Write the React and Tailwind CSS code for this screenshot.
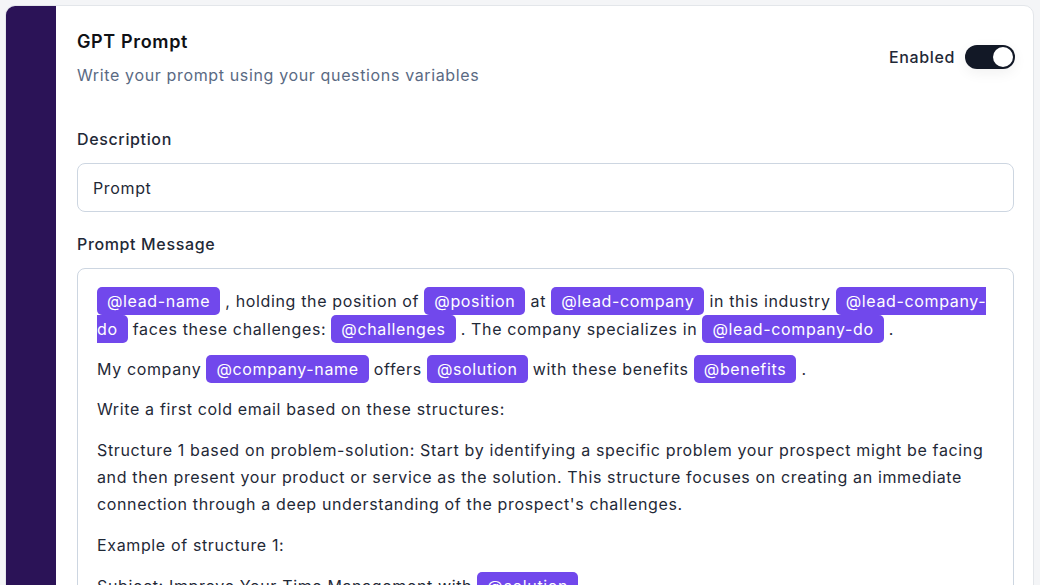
import React, { useState } from 'react';

const Tag = ({ children }) => (
    <span className="bg-[#7148ec] text-white rounded-[5px] px-[10px] py-[4px]">{children}</span>
);

const Toggle = () => {
    const [on, setOn] = useState(true);
    return (
        <button
            onClick={() => setOn(!on)}
            className={`relative w-[50px] h-[24px] rounded-full shadow-[0_4px_14px_rgba(0,0,0,0.06)] ${on ? 'bg-[#121826]' : 'bg-gray-300'}`}
        >
            <span className={`absolute top-[2px] w-[20px] h-[20px] rounded-full bg-white ${on ? 'left-[28px]' : 'left-[2px]'}`}></span>
        </button>
    );
};

const App = () => {
    return (
        <div className="min-h-screen bg-[#f4f5f7] pt-[5px] pl-[5px] pr-[6px] font-['Inter',sans-serif] tracking-[0.04em]">
            <div className="flex rounded-[10px] border border-[#e3e6ea] bg-white overflow-hidden">
                <div className="w-[50px] shrink-0 bg-[#2b1357]"></div>
                <div className="flex-1 pl-[21px] pr-[19px] pt-[22px] pb-10">
                    <div className="flex items-center justify-between">
                        <div>
                            <h2 className="text-[18px] leading-[28px] font-semibold text-[#0f1115]">GPT Prompt</h2>
                            <p className="mt-[7px] text-base leading-6 text-[#5a6a83]">Write your prompt using your questions variables</p>
                        </div>
                        <div className="flex items-center gap-[10px] mr-[-1px] mb-[2px]">
                            <span className="text-base font-medium text-[#1f2937]">Enabled</span>
                            <Toggle />
                        </div>
                    </div>

                    <label className="block mt-10 text-base leading-6 font-medium text-[#1f2937]">Description</label>
                    <div className="mt-3 h-[49px] flex items-center px-[15px] rounded-lg border border-[#cdd6e1] text-base text-[#1f2937]">
                        Prompt
                    </div>

                    <label className="block mt-5 text-base leading-6 font-medium text-[#1f2937]">Prompt Message</label>
                    <div className="mt-3 rounded-lg border border-[#cdd6e1] px-[19px] pt-[18px] pb-5 text-base leading-[27px] text-[#1f2937]">
                        <p className="mb-[13px] leading-[28px]">
                            <Tag>@lead-name</Tag> , holding the position of <Tag>@position</Tag> at <Tag>@lead-company</Tag> in this industry <Tag>@lead-company-do</Tag> faces these challenges: <Tag>@challenges</Tag> . The company specializes in <Tag>@lead-company-do</Tag> .
                        </p>
                        <p className="mb-[13px]">
                            My company <Tag>@company-name</Tag> offers <Tag>@solution</Tag> with these benefits <Tag>@benefits</Tag> .
                        </p>
                        <p className="mb-[14px]">Write a first cold email based on these structures:</p>
                        <p className="mb-[14px]">
                            Structure 1 based on problem-solution: Start by identifying a specific problem your prospect might be facing and then present your product or service as the solution. This structure focuses on creating an immediate connection through a deep understanding of the prospect's challenges.
                        </p>
                        <p className="mb-[14px]">Example of structure 1:</p>
                        <p className="mb-[14px]">
                            Subject: Improve Your Time Management with <Tag>@solution</Tag>
                        </p>
                        <p className="mb-[14px]">
                            Hi <Tag>@lead-name</Tag> ,
                        </p>
                    </div>
                </div>
            </div>
        </div>
    );
};

export default App;
